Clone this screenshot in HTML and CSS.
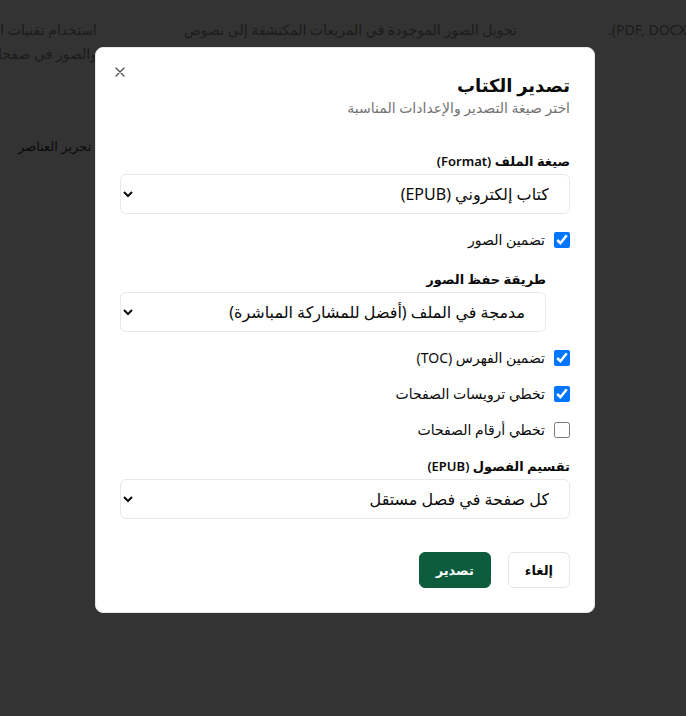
FILE: index.html
```html
<!DOCTYPE html>
<html lang="ar" dir="rtl">
<head>
<meta charset="utf-8">
<title>تصدير الكتاب</title>
<link rel="stylesheet" href="styles.css">
</head>
<body>
<div class="page">
  <div class="bg-row">
    <div class="bg-col bg-col-end">تصدير المستند بصيغ <bdi dir="ltr">.(PDF, DOCX, TXT</bdi></div>
    <div class="bg-col">تحويل الصور الموجودة في المربعات المكتشفة إلى نصوص قابلة للتعديل</div>
    <div class="bg-col">استخدام تقنيات الذكاء الاصطناعي لتحديد النصوص<br>والصور في صفحات المستند</div>
  </div>
  <div class="bg-heading-row">
    <div class="bg-heading">تحرير العناصر</div>
  </div>
</div>

<div class="overlay">
  <div class="dialog" role="dialog" aria-labelledby="dlg-title">
    <button class="close" aria-label="إغلاق">
      <svg width="16" height="16" viewBox="0 0 16 16" fill="none" stroke="currentColor" stroke-width="1.4" stroke-linecap="round"><path d="M4 4l8 8M12 4l-8 8"/></svg>
    </button>
    <div class="header">
      <h2 id="dlg-title" class="title">تصدير الكتاب</h2>
      <p class="subtitle">اختر صيغة التصدير والإعدادات المناسبة</p>
    </div>
    <div class="form">
      <div class="field">
        <label class="label">صيغة الملف (Format)</label>
        <select class="select"><option>كتاب إلكتروني (EPUB)</option></select>
      </div>
      <label class="check"><input type="checkbox" checked><span>تضمين الصور</span></label>
      <div class="field nested">
        <label class="label">طريقة حفظ الصور</label>
        <select class="select"><option>مدمجة في الملف (أفضل للمشاركة المباشرة)</option></select>
      </div>
      <div class="checks">
        <label class="check"><input type="checkbox" checked><span>تضمين الفهرس (TOC)</span></label>
        <label class="check"><input type="checkbox" checked><span>تخطي ترويسات الصفحات</span></label>
        <label class="check"><input type="checkbox"><span>تخطي أرقام الصفحات</span></label>
      </div>
      <div class="field">
        <label class="label">تقسيم الفصول (EPUB)</label>
        <select class="select"><option>كل صفحة في فصل مستقل</option></select>
      </div>
    </div>
    <div class="footer">
      <button class="btn btn-cancel">إلغاء</button>
      <button class="btn btn-primary">تصدير</button>
    </div>
  </div>
</div>
</body>
</html>
```

FILE: styles.css
```css
html, body {
  margin: 0;
  padding: 0;
  height: 100%;
  overflow: hidden;
}
body {
  font-family: "Noto Sans", "DejaVu Sans", sans-serif;
  background: #ffffff;
  color: #111;
}
.page {
  padding-top: 18px;
}
.bg-row {
  display: flex;
  gap: 70px;
  margin-right: -251px;
}
.bg-col {
  flex: 0 0 350px;
  font-size: 14px;
  line-height: 24px;
  color: #8c8c8c;
}
.bg-col-end {
  flex-basis: 329px;
  padding-left: 21px;
  white-space: nowrap;
  text-align: left;
}
.bg-heading-row {
  display: flex;
  justify-content: flex-end;
  padding-left: 18px;
  margin-top: 71px;
}
.bg-heading {
  font-size: 13px;
  font-weight: 500;
  color: #3c3c3c;
  white-space: nowrap;
}
.overlay {
  position: fixed;
  inset: 0;
  background: rgba(0, 0, 0, 0.8);
  display: flex;
  justify-content: center;
  align-items: flex-start;
  padding: 47px 0 0 4px;
}
.dialog {
  position: relative;
  width: 500px;
  box-sizing: border-box;
  background: #fff;
  border: 1px solid #e6e6e6;
  border-radius: 8px;
  padding: 23px 24px 24px;
  color: #0a0a0a;
}
.close {
  position: absolute;
  top: 16px;
  left: 16px;
  width: 16px;
  height: 16px;
  padding: 0;
  border: 0;
  background: none;
  color: #555;
  display: flex;
}
.header {
  display: flex;
  flex-direction: column;
}
.title {
  margin: 0;
  font-size: 18px;
  font-weight: 600;
  line-height: 28px;
}
.subtitle {
  margin: 0;
  font-size: 14px;
  line-height: 18px;
  color: #737373;
}
.form {
  display: flex;
  flex-direction: column;
  gap: 16px;
  padding-top: 34px;
}
.field {
  display: flex;
  flex-direction: column;
  gap: 3px;
}
.nested {
  margin-right: 24px;
  margin-top: 3px;
}
.label {
  font-size: 13px;
  font-weight: 600;
  line-height: 20px;
}
.select {
  height: 40px;
  font-family: inherit;
  font-size: 16px;
  color: #0a0a0a;
  background: #fff;
  border: 1px solid #e8e8e8;
  border-radius: 6px;
  padding: 0 16px 0 8px;
}
.checks {
  display: flex;
  flex-direction: column;
  gap: 16px;
}
.check {
  display: flex;
  align-items: center;
  gap: 9px;
  font-size: 14px;
  line-height: 20px;
}
.check input {
  margin: 0;
  width: 16px;
  height: 16px;
}
.footer {
  display: flex;
  gap: 17px;
  padding-top: 33px;
}
.btn {
  height: 36px;
  padding: 0 16px;
  border-radius: 6px;
  font-family: inherit;
  font-size: 13px;
  font-weight: 600;
}
.btn-cancel {
  background: #fff;
  border: 1px solid #e6e6e6;
  color: #0a0a0a;
}
.btn-primary {
  background: #0d5c3e;
  border: 1px solid #0d5c3e;
  color: #fff;
}
```
